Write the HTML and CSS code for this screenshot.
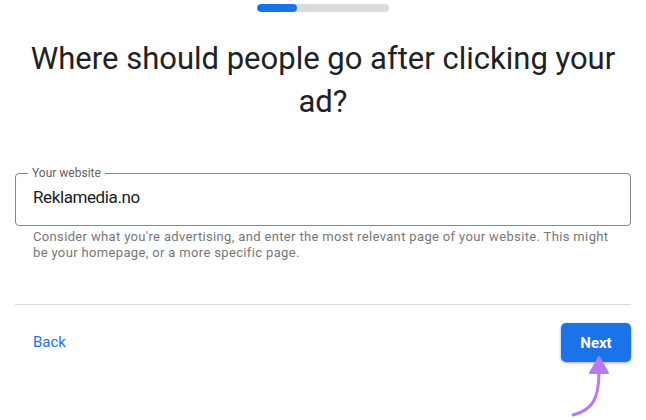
FILE: index.html
```html
<!DOCTYPE html>
<html lang="en">
<head>
    <meta charset="UTF-8">
    <title>Your website</title>
    <link rel="stylesheet" href="styles.css">
</head>
<body>
    <div class="page">
        <div class="progress"><div class="progress-fill"></div></div>

        <h1 class="title">Where should people go after clicking your ad?</h1>

        <fieldset class="field">
            <legend>Your website</legend>
            <div class="field-value">Reklamedia.no</div>
        </fieldset>
        <p class="hint">Consider what you're advertising, and enter the most relevant page of your website. This might be your homepage, or a more specific page.</p>

        <hr class="divider">

        <div class="actions">
            <button class="btn-back">Back</button>
            <div class="next-wrap">
                <button class="btn-next">Next</button>
                <svg class="arrow" width="50" height="70" viewBox="0 0 50 70">
                    <path d="M2 63 C 22 58, 28 46, 28 20" fill="none" stroke="#b77cf2" stroke-width="3" stroke-linecap="round"/>
                    <path d="M19 21 L28 5 L37 21 Z" fill="#b77cf2" stroke="#b77cf2" stroke-width="2" stroke-linejoin="round"/>
                </svg>
            </div>
        </div>
    </div>
</body>
</html>
```

FILE: styles.css
```css
* { box-sizing: border-box; }
body { margin: 0; background: #fff; font-family: Roboto, "Liberation Sans", sans-serif; }
.page { width: 646px; height: 420px; padding: 4px 15px 0 15px; overflow: hidden; }
.progress { width: 132px; height: 8px; margin: 0 auto; background: #dadce0; border-radius: 4px; overflow: hidden; }
.progress-fill { width: 40px; height: 8px; background: #1a73e8; border-radius: 4px; }
.title { margin: 25px 0 0; font-size: 31px; line-height: 43px; font-weight: 400; color: #202124; text-align: center; }
.field { margin: 44px 0 0; padding: 0 17px 12px; height: 59px; border: 1px solid #80868b; border-radius: 4px; }
.field legend { padding: 0 4px; margin-left: -5px; font-size: 12px; line-height: 12px; color: #5f6368; }
.field-value { margin-top: 8px; font-size: 17px; letter-spacing: -0.4px; color: #202124; }
.hint { margin: 3px 10px 0 18px; font-size: 13px; line-height: 16px; color: #777; letter-spacing: 0.35px; }
.divider { margin: 43px 0 0; border: 0; border-top: 1px solid #dadce0; }
.actions { display: flex; justify-content: space-between; align-items: flex-start; padding: 18px 0 0 18px; }
.btn-back { margin-top: 10px; padding: 0; border: 0; background: none; color: #1a73e8; font-family: inherit; font-size: 15px; cursor: pointer; }
.next-wrap { position: relative; }
.btn-next { width: 70px; height: 39px; border: 0; border-radius: 5px; background: #1a73e8; color: #fff; font-family: inherit; font-size: 15px; font-weight: 700; box-shadow: 0 1px 3px rgba(0,0,0,0.35); cursor: pointer; }
.arrow { position: absolute; left: 10px; top: 29px; }
```
